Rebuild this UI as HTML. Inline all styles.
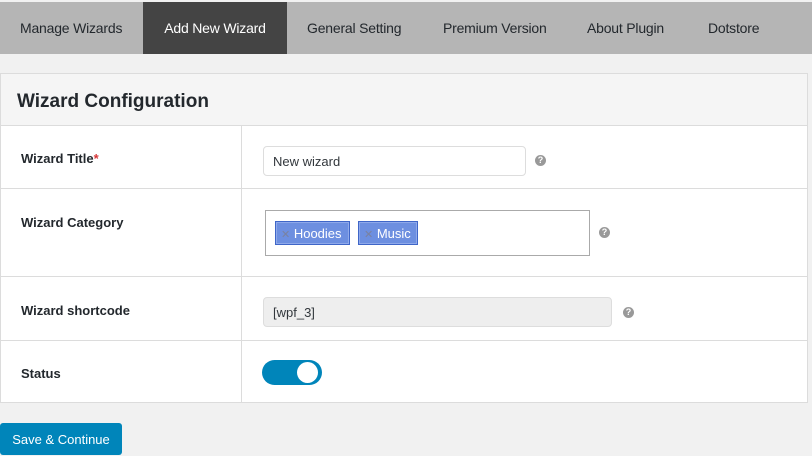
<!DOCTYPE html>
<html><head><style>
*{margin:0;padding:0;box-sizing:border-box}
body{width:812px;height:455px;background:#f1f1f1;font-family:"Liberation Sans",sans-serif;color:#23282d;position:relative;overflow:hidden}
.a{position:absolute}
.nav{left:0;top:2px;width:812px;height:52px;background:#b5b5b5}
.tab{position:absolute;top:0;height:52px;line-height:52px;font-size:14px;color:#23282d;white-space:nowrap;letter-spacing:-0.2px}
.act{background:#444;color:#fff;left:143px;width:144px;text-align:center}
.panel{left:0;top:73px;width:808px;height:330px;background:#fff;border:1px solid #dcdcdc}
.hl{left:0;width:808px;height:1px;background:#dcdcdc}
.lab{left:21px;font-size:13px;font-weight:bold;color:#23282d}
.q{width:11px;height:11px;border-radius:50%;background:#999;color:#fff;font-size:9px;font-weight:bold;text-align:center;line-height:11px}
.tag{top:221px;height:24px;background:#6d8fe0;border:1px solid #3f66c8;box-shadow:inset 0 0 0 1px #8fa9ea;color:#fff;font-size:13px;line-height:23px;padding-left:5px}
.x{color:#7a82a0;font-size:11px}
</style></head><body>
<div class="a nav">
<div class="tab" style="left:20px">Manage Wizards</div>
<div class="tab act">Add New Wizard</div>
<div class="tab" style="left:307px">General Setting</div>
<div class="tab" style="left:443px">Premium Version</div>
<div class="tab" style="left:587px">About Plugin</div>
<div class="tab" style="left:708px">Dotstore</div>
</div>
<div class="a panel"></div>
<div class="a" style="left:1px;top:74px;width:806px;height:51px;background:#f5f5f5"></div>
<div class="a" style="left:17px;top:91px;font-size:19px;font-weight:bold;color:#23282d">Wizard Configuration</div>
<div class="a hl" style="top:125px"></div>
<div class="a hl" style="top:188px"></div>
<div class="a hl" style="top:276px"></div>
<div class="a hl" style="top:340px"></div>
<div class="a" style="left:241px;top:125px;width:1px;height:277px;background:#dcdcdc"></div>
<div class="a lab" style="top:151px">Wizard Title<span style="color:#d63638">*</span></div>
<div class="a lab" style="top:215px">Wizard Category</div>
<div class="a lab" style="top:303px">Wizard shortcode</div>
<div class="a lab" style="top:366px">Status</div>
<div class="a" style="left:263px;top:146px;width:263px;height:30px;border:1px solid #ddd;border-radius:4px;font-size:13px;line-height:29px;padding-left:9px;color:#32373c">New wizard</div>
<div class="a q" style="left:535px;top:155px">?</div>
<div class="a" style="left:265px;top:210px;width:325px;height:46px;border:1px solid #aaa;background:#fff"></div>
<div class="a tag" style="left:275px;width:75px"><span class="x">✕</span> Hoodies</div>
<div class="a tag" style="left:358px;width:60px"><span class="x">✕</span> Music</div>
<div class="a q" style="left:599px;top:227px">?</div>
<div class="a" style="left:263px;top:297px;width:349px;height:30px;border:1px solid #ddd;border-radius:4px;background:#eee;font-size:13px;line-height:29px;padding-left:9px;color:#32373c">[wpf_3]</div>
<div class="a q" style="left:623px;top:307px">?</div>
<div class="a" style="left:262px;top:360px;width:60px;height:25px;border-radius:13px;background:#0085ba"></div>
<div class="a" style="left:297px;top:362px;width:21px;height:21px;border-radius:50%;background:#fff"></div>
<div class="a" style="left:0;top:423px;width:122px;height:32px;background:#0085ba;border-radius:3px;color:#fff;font-size:13px;line-height:33px;text-align:center">Save &amp; Continue</div>
</body></html>
